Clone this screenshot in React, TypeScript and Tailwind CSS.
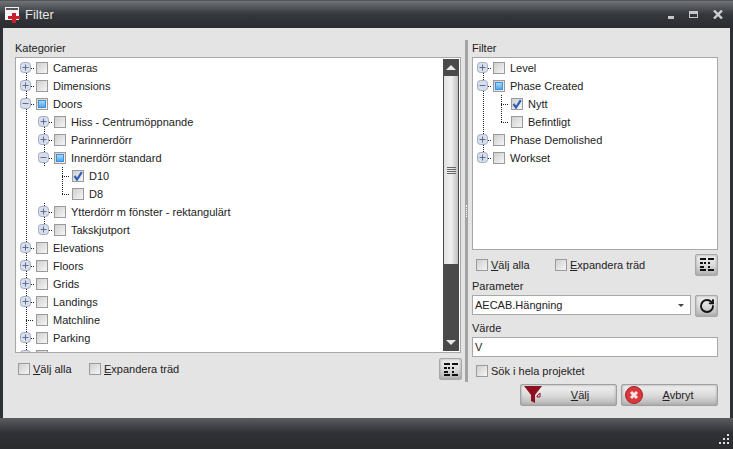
import { RotateCw } from "lucide-react";

const GRAD = "bg-gradient-to-b from-[#f1f1f1] via-[#dcdcdc] to-[#b4b4b4] shadow-[inset_0_0_3px_#a0a0a0]";

function Expander({ open, top, bottom }: { open: boolean; top?: boolean; bottom?: boolean }) {
  return (
    <svg width="18" height="18" className="shrink-0 block">
      {top && <line x1="10.5" y1="0" x2="10.5" y2="4" stroke="#222" strokeDasharray="1 1" />}
      {bottom && <line x1="10.5" y1="14" x2="10.5" y2="18" stroke="#222" strokeDasharray="1 1" />}
      <line x1="15" y1="9.5" x2="20" y2="9.5" stroke="#222" strokeDasharray="1 1" />
      <rect x="4.5" y="3.5" width="10" height="10" rx="3" fill="#d8deea" stroke="#a0abc4" />
      <line x1="6.5" y1="8.5" x2="12.5" y2="8.5" stroke="#5f6e96" />
      {!open && <line x1="9.5" y1="5.5" x2="9.5" y2="11.5" stroke="#5f6e96" />}
    </svg>
  );
}

function Guide() {
  return (
    <svg width="18" height="18" className="shrink-0 block">
      <line x1="10.5" y1="0" x2="10.5" y2="18" stroke="#222" strokeDasharray="1 1" />
    </svg>
  );
}

function LeafLine({ last }: { last?: boolean }) {
  return (
    <svg width="18" height="18" className="shrink-0 block">
      <line x1="10.5" y1="0" x2="10.5" y2={last ? 9 : 18} stroke="#222" strokeDasharray="1 1" />
      <line x1="10" y1="9.5" x2="20" y2="9.5" stroke="#222" strokeDasharray="1 1" />
    </svg>
  );
}

function Check({ state }: { state?: "on" | "part" }) {
  return (
    <span className="w-[12px] h-[12px] shrink-0 border border-[#9a9a9a] bg-gradient-to-br from-[#cfcfcf] to-[#f6f6f6] flex items-center justify-center">
      {state === "part" && <span className="w-[8px] h-[8px] border border-[#3f8fdc] bg-gradient-to-b from-[#a8d8f8] to-[#4aa8ea]" />}
      {state === "on" && (
        <svg width="10" height="10" viewBox="0 0 10 10">
          <path d="M1.5 5 L4 8.5 L8.8 1.2" fill="none" stroke="#2f5fb8" strokeWidth="2.2" />
        </svg>
      )}
    </span>
  );
}

type Row = { label: string; guides: ("g" | "n" | "l" | "e")[]; kind: "plus" | "minus" | "leaf"; state?: "on" | "part"; top?: boolean; bottom?: boolean };

function TreeRow({ r }: { r: Row }) {
  return (
    <div className="flex items-center h-[18px] shrink-0">
      {r.guides.map((g, i) =>
        g === "g" ? <Guide key={i} /> : g === "l" ? <LeafLine key={i} /> : g === "e" ? <LeafLine key={i} last /> : <span key={i} className="w-[18px] shrink-0" />,
      )}
      {r.kind !== "leaf" && <Expander open={r.kind === "minus"} top={r.top} bottom={r.bottom} />}
      <span className="ml-[2px]"><Check state={r.state} /></span>
      <span className="ml-[5px] whitespace-nowrap">{r.label}</span>
    </div>
  );
}

const LEFT: Row[] = [
  { label: "Cameras", guides: [], kind: "plus", bottom: true },
  { label: "Dimensions", guides: [], kind: "plus", top: true, bottom: true },
  { label: "Doors", guides: [], kind: "minus", state: "part", top: true, bottom: true },
  { label: "Hiss - Centrumöppnande", guides: ["g"], kind: "plus", bottom: true },
  { label: "Parinnerdörr", guides: ["g"], kind: "plus", top: true, bottom: true },
  { label: "Innerdörr standard", guides: ["g"], kind: "minus", state: "part", top: true, bottom: true },
  { label: "D10", guides: ["g", "n", "l"], kind: "leaf", state: "on" },
  { label: "D8", guides: ["g", "n", "e"], kind: "leaf" },
  { label: "Ytterdörr m fönster - rektangulärt", guides: ["g"], kind: "plus", top: true, bottom: true },
  { label: "Takskjutport", guides: ["g"], kind: "plus", top: true },
  { label: "Elevations", guides: [], kind: "plus", top: true, bottom: true },
  { label: "Floors", guides: [], kind: "plus", top: true, bottom: true },
  { label: "Grids", guides: [], kind: "plus", top: true, bottom: true },
  { label: "Landings", guides: [], kind: "plus", top: true, bottom: true },
  { label: "Matchline", guides: ["l"], kind: "leaf" },
  { label: "Parking", guides: [], kind: "plus", top: true, bottom: true },
  { label: "", guides: [], kind: "plus", top: true, bottom: true },
];

const RIGHT: Row[] = [
  { label: "Level", guides: [], kind: "plus", bottom: true },
  { label: "Phase Created", guides: [], kind: "minus", state: "part", top: true, bottom: true },
  { label: "Nytt", guides: ["g", "l"], kind: "leaf", state: "on" },
  { label: "Befintligt", guides: ["g", "e"], kind: "leaf" },
  { label: "Phase Demolished", guides: [], kind: "plus", top: true, bottom: true },
  { label: "Workset", guides: [], kind: "plus", top: true },
];

function GridBtn() {
  return (
    <button className={`w-[23px] h-[22px] shrink-0 border border-[#a8a8a8] rounded-[2px] flex items-center justify-center ${GRAD}`}>
      <svg width="14" height="13" viewBox="0 0 14 13" fill="#111">
        <rect x="0" y="0" width="6" height="2" />
        <rect x="8" y="0" width="6" height="2" />
        <rect x="0" y="4" width="3" height="2" />
        <rect x="4" y="4" width="2" height="2" />
        <rect x="8" y="4" width="2" height="2" />
        <rect x="0" y="8" width="4" height="2" />
        <rect x="8" y="8" width="2" height="2" />
        <rect x="0" y="11" width="6" height="2" />
        <rect x="8" y="11" width="6" height="2" />
      </svg>
    </button>
  );
}

function CheckLabel({ label, hot, className }: { label: string; hot?: string; className?: string }) {
  const rest = hot ? label.slice(hot.length) : label;
  return (
    <label className={`flex items-center gap-[3px] shrink-0 ${className ?? ""}`}>
      <Check />
      <span>{hot && <span className="underline">{hot}</span>}{rest}</span>
    </label>
  );
}

function Funnel() {
  return (
    <svg width="20" height="18" viewBox="0 0 20 18" className="shrink-0">
      <path d="M0 0 H18 L11 9 V17 L7 15 V9 Z" fill="#8e1020" />
      <path d="M13 10 L16 7 V11 L13 11 Z" fill="none" stroke="#8e1020" />
    </svg>
  );
}

function Cancel() {
  return (
    <svg width="18" height="18" viewBox="0 0 18 18" className="shrink-0">
      <circle cx="9" cy="9" r="8.5" fill="#d8383c" stroke="#a82228" />
      <path d="M6 6 L12 12 M12 6 L6 12" stroke="#f4e6e6" strokeWidth="3" />
    </svg>
  );
}

export default function App() {
  return (
    <div
      className="w-[733px] h-[449px] overflow-hidden flex flex-col bg-[#2d3035] text-[11px] leading-[14px] text-[#222]"
      style={{ fontFamily: '"Liberation Sans", sans-serif' }}
    >
      {/* title bar */}
      <div className="h-[28px] shrink-0 flex items-center pl-[5px] pr-[10px] bg-gradient-to-b from-[#6f7478] via-[#34373b] to-[#2a2c30] border-t border-[#555]">
        <svg width="16" height="16" viewBox="0 0 16 16" className="shrink-0">
          <rect x="0" y="0" width="14" height="13" fill="#f4f4f4" />
          <rect x="1" y="1" width="12" height="2" fill="#555" />
          <path d="M7 6 H11 V9 H15 V12 H11 V16 H7 V12 H3 V9 H7 Z" fill="#c8202c" />
        </svg>
        <span className="ml-[4px] text-[13px] text-[#e8e8e8]">Filter</span>
        <div className="ml-auto flex items-center gap-[15px]">
          <span className="w-[6px] h-[3px] mt-[5px] bg-[#c8c8c8]" />
          <span className="w-[9px] h-[7px] border border-[#c8c8c8] border-t-[3px]" />
          <svg width="10" height="9" viewBox="0 0 10 9"><path d="M1 0.5 L9 8.5 M9 0.5 L1 8.5" stroke="#d0d0d0" strokeWidth="2.4" /></svg>
        </div>
      </div>

      {/* body */}
      <div className="h-[390px] shrink-0 mx-[3px] bg-[#e4e4e4] flex pl-[12px] pr-[12px] pt-[12px]">
        {/* left */}
        <div className="w-[446px] shrink-0 flex flex-col">
          <div className="h-[17px] pb-[2px] flex items-center">Kategorier</div>
          <div className="h-[296px] shrink-0 border border-[#a8a8a8] bg-white flex overflow-hidden">
            <div className="flex-1 pt-[1px] flex flex-col overflow-hidden">
              {LEFT.map((r, i) => <TreeRow key={i} r={r} />)}
            </div>
            <div className="w-[16px] shrink-0 my-[1px] mr-[1px] flex flex-col bg-[#4a4a4a]">
              <div className="h-[17px] flex items-center justify-center">
                <span className="w-0 h-0 border-x-[5px] border-x-transparent border-b-[5px] border-b-[#e8e8e8]" />
              </div>
              <div className="h-[188px] mx-[1px] bg-gradient-to-r from-[#e0e0e0] via-[#f0f0f0] to-[#c0c0c0] flex flex-col items-center justify-center gap-[1px]">
                <span className="w-[9px] h-[1px] bg-[#666]" />
                <span className="w-[9px] h-[1px] bg-[#666]" />
                <span className="w-[9px] h-[1px] bg-[#666]" />
                <span className="w-[9px] h-[1px] bg-[#666]" />
              </div>
              <div className="flex-1" />
              <div className="h-[17px] flex items-center justify-center">
                <span className="w-0 h-0 border-x-[5px] border-x-transparent border-t-[5px] border-t-[#e8e8e8]" />
              </div>
            </div>
          </div>
          <div className="flex items-center mt-[5px] h-[22px] pl-[3px]">
            <CheckLabel label="Välj alla" hot="V" className="w-[71px]" />
            <CheckLabel label="Expandera träd" hot="E" />
            <div className="ml-auto -mr-[1px]"><GridBtn /></div>
          </div>
        </div>

        {/* splitter */}
        <div className="w-[11px] shrink-0 pl-[4px]">
          <div className="w-[3px] h-[342px] bg-[#a4a4a4] flex items-center justify-center">
            <span className="w-[1px] h-[12px] border-l border-dotted border-white" />
          </div>
        </div>

        {/* right */}
        <div className="flex-1 flex flex-col min-w-0">
          <div className="h-[17px] pb-[2px] flex items-center">Filter</div>
          <div className="h-[193px] shrink-0 border border-[#a8a8a8] bg-white pt-[1px] flex flex-col">
            {RIGHT.map((r, i) => <TreeRow key={i} r={r} />)}
          </div>
          <div className="flex items-center mt-[3px] h-[23px] pl-[4px]">
            <CheckLabel label="Välj alla" hot="V" className="w-[79px]" />
            <CheckLabel label="Expandera träd" hot="E" />
            <div className="ml-auto"><GridBtn /></div>
          </div>
          <div className="h-[17px] mt-[2px] pb-[2px] flex items-center">Parameter</div>
          <div className="flex gap-[4px] items-start">
            <div className="flex-1 h-[20px] border border-[#a8a8a8] bg-white flex items-center pl-[2px] pr-[6px]">
              <span>AECAB.Hängning</span>
              <span className="ml-auto w-0 h-0 border-x-[3px] border-x-transparent border-t-[3px] border-t-[#444]" />
            </div>
            <button className={`w-[23px] h-[22px] shrink-0 border border-[#a8a8a8] rounded-[2px] flex items-center justify-center ${GRAD}`}>
              <RotateCw size={16} strokeWidth={2.75} color="#111" />
            </button>
          </div>
          <div className="h-[17px] mt-[3px] pb-[2px] flex items-center">Värde</div>
          <div className="h-[20px] shrink-0 border border-[#a8a8a8] bg-white flex items-center pl-[2px]">V</div>
          <div className="mt-[7px] h-[14px] pl-[4px] flex items-center"><CheckLabel label="Sök i hela projektet" /></div>
          <div className="flex justify-end gap-[4px] mt-[6px]">
            <button className={`w-[97px] h-[22px] border border-[#a0a0a0] rounded-[2px] flex items-center pl-[3px] ${GRAD}`}>
              <Funnel />
              <span className="flex-1 text-center"><span className="underline">V</span>älj</span>
            </button>
            <button className={`w-[97px] h-[22px] border border-[#a0a0a0] rounded-[2px] flex items-center pl-[3px] ${GRAD}`}>
              <Cancel />
              <span className="flex-1 text-center pr-[4px]"><span className="underline">A</span>vbryt</span>
            </button>
          </div>
        </div>
      </div>

      {/* status bar */}
      <div className="flex-1 bg-gradient-to-b from-[#5a5d60] via-[#2e3035] to-[#2a2c30] flex items-end justify-end pr-[3px] pb-[4px]">
        <svg width="11" height="11" viewBox="0 0 11 11" fill="#ddd">
          <rect x="8" y="0" width="2" height="2" />
          <rect x="4" y="4" width="2" height="2" />
          <rect x="8" y="4" width="2" height="2" />
          <rect x="0" y="8" width="2" height="2" />
          <rect x="4" y="8" width="2" height="2" />
          <rect x="8" y="8" width="2" height="2" />
        </svg>
      </div>
    </div>
  );
}
